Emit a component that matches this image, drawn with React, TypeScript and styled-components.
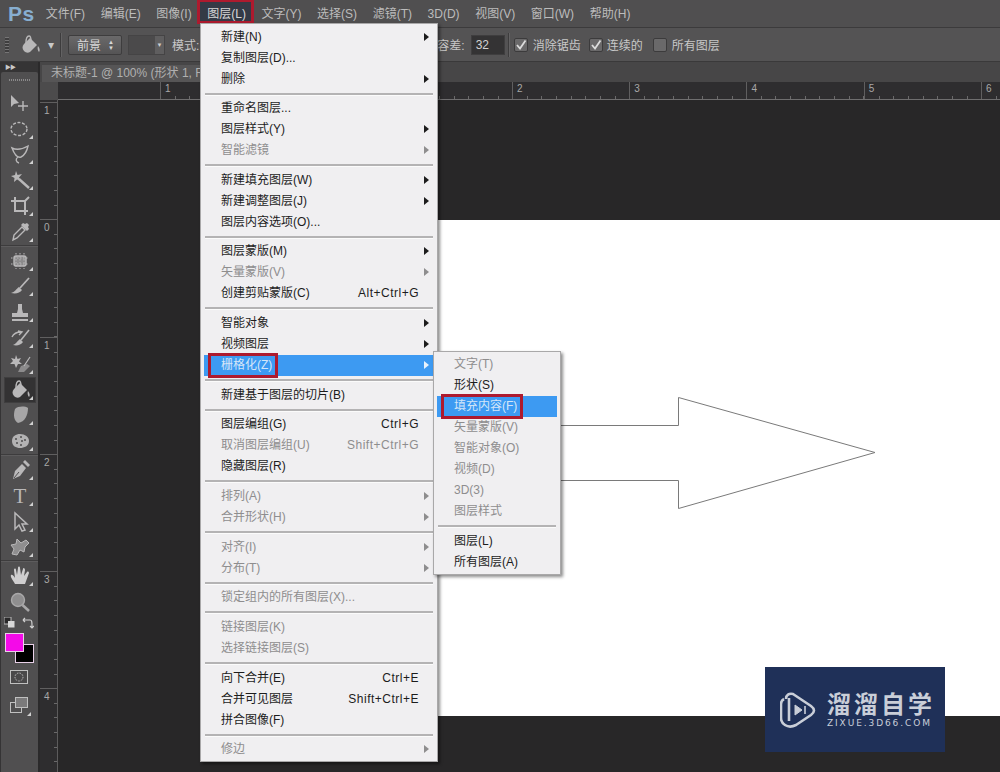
import React from 'react';
import styled, { createGlobalStyle } from 'styled-components';

const FONT = `"Liberation Sans", "Noto Sans CJK SC", sans-serif`;
const ICON = '#b9b8b9';

const colors = {
  bar: '#504f50',
  options: '#545354',
  tabRow: '#474647',
  ruler: '#2e2d2f',
  doc: '#282728',
  menu: '#f0eff1',
  highlight: '#3d9af2',
  red: '#ad1a2e',
};

const GlobalStyle = createGlobalStyle`
  html, body {
    margin: 0;
    padding: 0;
    background: ${colors.doc};
  }
  * {
    box-sizing: border-box;
  }
`;

const Styled = {
  Page: styled.div`
    position: relative;
    display: flex;
    flex-direction: column;
    width: 1000px;
    height: 772px;
    overflow: hidden;
    background: ${colors.doc};
    font-family: ${FONT};
    font-size: 12px;
  `,
  MenuBar: styled.div`
    display: flex;
    align-items: center;
    flex: none;
    height: 28px;
    padding-left: 8px;
    background: ${colors.bar};
    border-bottom: 1px solid #3c3b3c;
  `,
  Logo: styled.span`
    width: 30px;
    font-size: 21px;
    font-weight: 700;
    letter-spacing: 0.5px;
    color: #87aed0;
  `,
  BarItem: styled.span<{ $active?: boolean }>`
    position: relative;
    padding: 0 7.8px;
    line-height: 28px;
    white-space: nowrap;
    color: ${(p) => (p.$active ? '#d6d6d6' : '#bcbcbc')};
    ${(p) =>
      p.$active &&
      `
      &::before {
        content: '';
        position: absolute;
        inset: 0 0 4px -2px;
        background: #343a46;
        border: 3px solid ${colors.red};
        border-top-width: 2px;
        z-index: 0;
      }
    `}
  `,
  BarLabel: styled.span`
    position: relative;
  `,
  OptionsBar: styled.div`
    display: flex;
    align-items: center;
    flex: none;
    height: 34px;
    padding-left: 5px;
    background: ${colors.options};
    border-bottom: 1px solid #3a393a;
    color: #c8c8c8;
  `,
  Grip: styled.span`
    width: 4px;
    height: 16px;
    background: repeating-linear-gradient(#767576 0 1px, #3f3e3f 1px 3px);
  `,
  OptionIcon: styled.span<{ $ml: number }>`
    display: flex;
    margin-left: ${(p) => p.$ml}px;
  `,
  OptionDivider: styled.span<{ $ml: number }>`
    width: 1px;
    height: 24px;
    margin-left: ${(p) => p.$ml}px;
    background: #3d3c3d;
    box-shadow: 1px 0 0 #636263;
  `,
  Select: styled.span`
    display: flex;
    align-items: center;
    justify-content: space-between;
    width: 54px;
    height: 20px;
    margin-left: 7px;
    padding: 0 7px 0 8px;
    background: linear-gradient(#6a696a, #555455);
    border: 1px solid #3e3d3e;
    border-radius: 2px;
    color: #d8d8d8;
  `,
  SelectArrows: styled.span`
    font-size: 6px;
    line-height: 6px;
    color: #d8d8d8;
    text-align: center;
  `,
  Pattern: styled.span`
    display: flex;
    justify-content: flex-end;
    width: 37px;
    height: 20px;
    margin-left: 6px;
    background: #4b4a4b;
    border: 1px solid #454445;
  `,
  PatternCaret: styled.span`
    width: 9px;
    background: #5f5e5f;
    color: #cfcfcf;
    font-size: 6px;
    line-height: 18px;
    text-align: center;
  `,
  OptionText: styled.span<{ $ml: number }>`
    margin-left: ${(p) => p.$ml}px;
    white-space: nowrap;
  `,
  NumberBox: styled.span`
    width: 34px;
    height: 20px;
    margin-left: 6px;
    padding-left: 4px;
    background: #343334;
    border: 1px solid #3f3e3f;
    font-size: 12px;
    line-height: 18px;
    color: #d2d2d2;
  `,
  Check: styled.span<{ $ml: number }>`
    display: flex;
    align-items: center;
    justify-content: center;
    width: 14px;
    height: 14px;
    margin-left: ${(p) => p.$ml}px;
    background: #6a696a;
    border: 1px solid #3c3b3c;
    border-radius: 2px;
  `,
  Workspace: styled.div`
    display: flex;
    flex: 1;
    min-height: 0;
  `,
  ToolColumn: styled.div`
    flex: none;
    width: 40px;
    background: #353435;
    border-right: 2px solid #2b2a2b;
  `,
  Collapse: styled.div`
    height: 10px;
    padding-left: 5px;
    font-size: 6px;
    line-height: 10px;
    letter-spacing: -1px;
    color: #c8c8c8;
  `,
  Tools: styled.div`
    height: 700px;
    margin-left: 1px;
    background: #504f50;
    border-radius: 2px 2px 0 0;
  `,
  ToolGrip: styled.div`
    height: 18px;
    padding: 7px 8px 0;
    &::before {
      content: '';
      display: block;
      height: 2px;
      background: repeating-linear-gradient(90deg, #8a898a 0 1px, #504f50 1px 2px);
    }
  `,
  ToolSep: styled.div`
    height: 3px;
    border-top: 1px solid #3d3c3d;
    box-shadow: inset 0 1px 0 #5d5c5d;
  `,
  ToolButton: styled.div<{ $selected?: boolean; $corner?: boolean }>`
    position: relative;
    display: flex;
    align-items: center;
    justify-content: center;
    height: 25.8px;
    margin: 0 2px 0 3px;
    background: ${(p) => (p.$selected ? '#333233' : 'transparent')};
    box-shadow: ${(p) => (p.$selected ? 'inset 0 0 0 1px #3f3e3f' : 'none')};
    ${(p) =>
      p.$corner &&
      `
      &::after {
        content: '';
        position: absolute;
        right: 3px;
        bottom: 3px;
        border-left: 4px solid transparent;
        border-bottom: 4px solid #d0d0d0;
      }
    `}
  `,
  ToolLetter: styled.span`
    font-family: "Liberation Serif", serif;
    font-size: 21px;
    line-height: 24px;
    color: ${ICON};
  `,
  ColorBlock: styled.div`
    position: relative;
    height: 49px;
  `,
  MiniIcon: styled.span<{ $x: number }>`
    position: absolute;
    left: ${(p) => p.$x}px;
    top: 2px;
    display: flex;
  `,
  Swatch: styled.span<{ $x: number; $y: number; $fill: string }>`
    position: absolute;
    left: ${(p) => p.$x}px;
    top: ${(p) => p.$y}px;
    width: 19px;
    height: 19px;
    background: ${(p) => p.$fill};
    border: 1px solid #e8d0e8;
  `,
  FlatTool: styled.div<{ $height: number; $corner?: boolean }>`
    position: relative;
    display: flex;
    align-items: center;
    justify-content: center;
    height: ${(p) => p.$height}px;
    margin-right: 2px;
    ${(p) =>
      p.$corner &&
      `
      &::after {
        content: '';
        position: absolute;
        right: 5px;
        bottom: 4px;
        border-left: 4px solid transparent;
        border-bottom: 4px solid #d0d0d0;
      }
    `}
  `,
  DocColumn: styled.div`
    display: flex;
    flex-direction: column;
    flex: 1;
    min-width: 0;
  `,
  TabRow: styled.div`
    flex: none;
    height: 20px;
    background: ${colors.tabRow};
  `,
  Tab: styled.div`
    width: 170px;
    height: 17px;
    margin: 3px 0 0 2px;
    padding-left: 9px;
    background: #565556;
    line-height: 17px;
    white-space: nowrap;
    color: #b0b0b0;
  `,
  RulerRow: styled.div`
    display: flex;
    flex: none;
    height: 18px;
  `,
  Corner: styled.div`
    flex: none;
    width: 18px;
    background: #4c4b4c;
  `,
  HRuler: styled.div`
    display: flex;
    flex: 1;
    padding-left: 102px;
    overflow: hidden;
    background: ${colors.ruler};
    border-bottom: 1px solid #6f6e6f;
  `,
  HSegment: styled.div`
    flex: none;
    width: 117.3px;
    padding: 1px 0 0 4px;
    font-size: 10px;
    line-height: 12px;
    color: #a8a8a8;
    border-left: 1px solid #605f60;
    background:
      repeating-linear-gradient(90deg, transparent 0 13.66px, #6a696a 13.66px 14.66px) 0 100% / 100% 3px no-repeat;
  `,
  DocBody: styled.div`
    display: flex;
    flex: 1;
    min-height: 0;
  `,
  VRuler: styled.div`
    flex: none;
    width: 18px;
    padding-top: 2px;
    overflow: hidden;
    background: ${colors.ruler};
    border-right: 1px solid #5c5b5c;
  `,
  VSegment: styled.div`
    height: 117.3px;
    padding: 2px 0 0 4px;
    font-size: 10px;
    line-height: 12px;
    color: #a8a8a8;
    border-top: 1px solid #605f60;
    background:
      repeating-linear-gradient(transparent 0 13.66px, #6a696a 13.66px 14.66px) 100% 0 / 3px 100% no-repeat;
  `,
  Stage: styled.div`
    flex: 1;
    padding: 120px 0 0 219px;
    overflow: hidden;
    background: ${colors.doc};
  `,
  Canvas: styled.div`
    width: 723px;
    height: 496px;
    background: #ffffff;
  `,
  ArrowShape: styled.svg`
    display: block;
  `,
  Menu: styled.div<{ $x: number; $y: number; $w: number }>`
    position: absolute;
    left: ${(p) => p.$x}px;
    top: ${(p) => p.$y}px;
    width: ${(p) => p.$w}px;
    padding: 2.5px 3px 1px;
    background: ${colors.menu};
    border: 1px solid #a9a8a9;
    box-shadow: 2px 2px 3px rgba(0, 0, 0, 0.45);
  `,
  Row: styled.div<{ $active?: boolean; $disabled?: boolean }>`
    position: relative;
    display: flex;
    justify-content: space-between;
    height: 21px;
    padding: 0 15px 0 17px;
    line-height: 21px;
    white-space: nowrap;
    background: ${(p) => (p.$active ? colors.highlight : 'transparent')};
    color: ${(p) => (p.$active ? '#d4e6f8' : p.$disabled ? '#8e8d8e' : '#1c1c1c')};
  `,
  RowLabel: styled.span<{ $marked?: boolean }>`
    position: relative;
    ${(p) =>
      p.$marked &&
      `
      &::after {
        content: '';
        position: absolute;
        inset: -2px -6px -2px -13px;
        border: 3px solid ${colors.red};
      }
    `}
  `,
  Shortcut: styled.span`
    letter-spacing: 0.5px;
  `,
  Caret: styled.span<{ $light?: boolean; $disabled?: boolean }>`
    position: absolute;
    right: 5px;
    top: 6px;
    border-top: 4.5px solid transparent;
    border-bottom: 4.5px solid transparent;
    border-left: 5px solid
      ${(p) => (p.$light ? '#e8f2fc' : p.$disabled ? '#8e8d8e' : '#1c1c1c')};
  `,
  Separator: styled.div`
    height: 8.67px;
    padding-top: 3px;
    margin: 0 1px;
    &::before {
      content: '';
      display: block;
      height: 2px;
      background: #b4b3b4;
      border-bottom: 1px solid #fbfbfb;
    }
  `,
  Watermark: styled.div`
    position: absolute;
    left: 765px;
    top: 667px;
    display: flex;
    align-items: center;
    gap: 11px;
    width: 180px;
    height: 85px;
    padding: 0 0 0 15px;
    background: #1f3058;
    color: #c9ced8;
  `,
  WatermarkText: styled.div`
    display: flex;
    flex-direction: column;
  `,
  WatermarkTitle: styled.span`
    font-family: "Noto Sans CJK SC", sans-serif;
    font-size: 24px;
    font-weight: 700;
    line-height: 28px;
    letter-spacing: 3px;
    white-space: nowrap;
  `,
  WatermarkSub: styled.span`
    font-family: "DejaVu Sans", sans-serif;
    font-size: 9px;
    line-height: 13px;
    letter-spacing: 1.9px;
    white-space: nowrap;
  `,
};

type MenuEntry =
  | 'sep'
  | {
      label: string;
      shortcut?: string;
      arrow?: boolean;
      disabled?: boolean;
      active?: boolean;
      marked?: boolean;
    };

const layerMenu: MenuEntry[] = [
  { label: '新建(N)', arrow: true },
  { label: '复制图层(D)...' },
  { label: '删除', arrow: true },
  'sep',
  { label: '重命名图层...' },
  { label: '图层样式(Y)', arrow: true },
  { label: '智能滤镜', arrow: true, disabled: true },
  'sep',
  { label: '新建填充图层(W)', arrow: true },
  { label: '新建调整图层(J)', arrow: true },
  { label: '图层内容选项(O)...' },
  'sep',
  { label: '图层蒙版(M)', arrow: true },
  { label: '矢量蒙版(V)', arrow: true, disabled: true },
  { label: '创建剪贴蒙版(C)', shortcut: 'Alt+Ctrl+G' },
  'sep',
  { label: '智能对象', arrow: true },
  { label: '视频图层', arrow: true },
  { label: '栅格化(Z)', arrow: true, active: true, marked: true },
  'sep',
  { label: '新建基于图层的切片(B)' },
  'sep',
  { label: '图层编组(G)', shortcut: 'Ctrl+G' },
  { label: '取消图层编组(U)', shortcut: 'Shift+Ctrl+G', disabled: true },
  { label: '隐藏图层(R)' },
  'sep',
  { label: '排列(A)', arrow: true, disabled: true },
  { label: '合并形状(H)', arrow: true, disabled: true },
  'sep',
  { label: '对齐(I)', arrow: true, disabled: true },
  { label: '分布(T)', arrow: true, disabled: true },
  'sep',
  { label: '锁定组内的所有图层(X)...', disabled: true },
  'sep',
  { label: '链接图层(K)', disabled: true },
  { label: '选择链接图层(S)', disabled: true },
  'sep',
  { label: '向下合并(E)', shortcut: 'Ctrl+E' },
  { label: '合并可见图层', shortcut: 'Shift+Ctrl+E' },
  { label: '拼合图像(F)' },
  'sep',
  { label: '修边', arrow: true, disabled: true },
];

const rasterizeMenu: MenuEntry[] = [
  { label: '文字(T)', disabled: true },
  { label: '形状(S)' },
  { label: '填充内容(F)', active: true, marked: true },
  { label: '矢量蒙版(V)', disabled: true },
  { label: '智能对象(O)', disabled: true },
  { label: '视频(D)', disabled: true },
  { label: '3D(3)', disabled: true },
  { label: '图层样式', disabled: true },
  'sep',
  { label: '图层(L)' },
  { label: '所有图层(A)' },
];

const barItems = ['文件(F)', '编辑(E)', '图像(I)', '图层(L)', '文字(Y)', '选择(S)', '滤镜(T)', '3D(D)', '视图(V)', '窗口(W)', '帮助(H)'];

const Icon = ({ children, size = 24 }: { children: React.ReactNode; size?: number }) => (
  <svg width={size} height={size} viewBox={`0 0 ${size} ${size}`} fill="none" stroke={ICON} strokeWidth="1.4">
    {children}
  </svg>
);

const BucketIcon = () => (
  <>
    <path d="M6 11 L12 5 L19 12 L12 19 C10 20 8 20 6 18 C4 16 4 13 6 11 Z" fill={ICON} stroke="none" />
    <path d="M8 10 C8 6 9 3 11 3 C13 3 13 6 13 8" />
    <path d="M20 13 C22 15 22 18 21 19 C20 18 19 15 20 13 Z" fill={ICON} stroke="none" />
  </>
);

const toolGroups: { key: string; icon: React.ReactNode; corner?: boolean; selected?: boolean }[][] = [
  [
    {
      key: 'move',
      icon: (
        <>
          <path d="M3 4 L3 16 L6 13 L11 12 Z" fill={ICON} stroke="none" />
          <path d="M15 10 V20 M10 15 H20" />
        </>
      ),
    },
    { key: 'marquee', corner: true, icon: <ellipse cx="11" cy="12" rx="8" ry="6.5" strokeDasharray="3 1.6" /> },
    {
      key: 'lasso',
      corner: true,
      icon: <path d="M4 6 C8 8 13 8 20 4 C19 9 17 13 13 15 C10 16 7 14 4 6 Z M10 15 C7 17 8 20 11 21" />,
    },
    {
      key: 'wand',
      corner: true,
      icon: (
        <>
          <path d="M11 11 L21 20" strokeWidth="2.4" />
          <path d="M8 3 L9.5 7 L14 6 L11 9.5 L13 13 L9 11.5 L6 14 L6.5 10 L3 8 L7 7 Z" fill={ICON} stroke="none" />
        </>
      ),
    },
    {
      key: 'crop',
      corner: true,
      icon: <path d="M7 3 V17 H20 M3 7 H17 V21 M17 7 L21 3" strokeWidth="2" />,
    },
    {
      key: 'eyedropper',
      corner: true,
      icon: (
        <>
          <path d="M14 7 L17 10 L9 18 L5 20 L6 15 Z" />
          <path d="M13 5 L19 11 L21 9 L20 7 L21 5 L19 3 L17 4 L15 3 Z" fill={ICON} stroke="none" />
        </>
      ),
    },
  ],
  [
    {
      key: 'heal',
      corner: true,
      icon: (
        <>
          <rect x="6" y="7" width="12" height="10" rx="2" fill="#8c8b8c" stroke={ICON} />
          <path d="M8 4 V20 M12 4 V20 M16 4 V20 M3 9 H21 M3 15 H21" strokeDasharray="1.5 1.5" strokeWidth="1" />
        </>
      ),
    },
    {
      key: 'brush',
      corner: true,
      icon: (
        <>
          <path d="M21 4 L12 14" strokeWidth="1.8" />
          <path d="M11 13 L14 16 C12 19 8 20 3 19 C7 18 8 15 11 13 Z" fill={ICON} stroke="none" />
        </>
      ),
    },
    {
      key: 'stamp',
      corner: true,
      icon: (
        <path
          d="M10 4 H14 V9 L15 13 H20 V17 H4 V13 H9 L10 9 Z M4 19 H20 V21 H4 Z"
          fill={ICON}
          stroke="none"
        />
      ),
    },
    {
      key: 'history',
      corner: true,
      icon: (
        <>
          <path d="M21 4 L13 14" strokeWidth="1.6" />
          <path d="M12 13 L15 16 C13 19 9 20 5 19 C8 18 9 15 12 13 Z" fill={ICON} stroke="none" />
          <path d="M4 11 C6 7 9 6 13 6 M10 5 L14 6 L11 9" />
        </>
      ),
    },
    {
      key: 'eraser',
      corner: true,
      icon: (
        <>
          <path d="M8 3 L9.5 7 L13 6 L11 9.5 L14 12 L10 12 L8 16 L6.5 12 L2 12 L5 9 L3 6 L7 7 Z" fill={ICON} stroke="none" />
          <path d="M13 14 L19 12 L22 14 L16 20 L10 20 Z" fill="#8c8b8c" stroke="none" />
          <path d="M16 14 L22 5" strokeWidth="1.2" />
        </>
      ),
    },
    { key: 'bucket', corner: true, selected: true, icon: <BucketIcon /> },
    {
      key: 'smudge',
      corner: true,
      icon: <path d="M7 6 C10 3 17 3 20 5 C20 12 17 19 10 20 C6 18 5 12 7 6 Z" fill="#a7a6a7" stroke="none" />,
    },
    {
      key: 'sponge',
      corner: true,
      icon: (
        <>
          <path d="M4 12 C4 7 8 5 12 5 C17 5 21 8 21 12 C21 17 16 19 12 19 C8 19 4 17 4 12 Z" fill="#b3b2b3" stroke="none" />
          <path d="M7 10 H9 M12 8 H14 M16 11 H18 M8 14 H10 M13 12 H15 M12 16 H14" stroke="#504f50" />
        </>
      ),
    },
  ],
  [
    {
      key: 'pen',
      corner: true,
      icon: (
        <>
          <path d="M14 6 L18 10 L12 18 L5 21 L7 13 Z" fill={ICON} stroke="none" />
          <path d="M15 4 L17 2 L22 7 L20 9 Z" fill={ICON} stroke="none" />
          <path d="M6 20 L11 14" stroke="#504f50" strokeWidth="1" />
        </>
      ),
    },
    { key: 'type', corner: true, icon: null },
    {
      key: 'path',
      corner: true,
      icon: <path d="M7 3 V19 L11 15 L14 21 L17 20 L14 14 L19 14 Z" fill="#504f50" strokeWidth="1.5" />,
    },
    {
      key: 'shape',
      corner: true,
      icon: (
        <path
          d="M9 4 L13 8 L18 5 L21 8 L17 12 L16 17 L12 15 L9 20 L4 19 L6 14 L3 10 L8 9 Z"
          fill="#8f8e8f"
          stroke={ICON}
          strokeWidth="1"
        />
      ),
    },
  ],
  [
    {
      key: 'hand',
      corner: true,
      icon: (
        <path
          d="M7 20 C5 16 2 13 3 11 C4 10 6 12 7 14 L6 6 C6 4 8 4 8 6 L9 11 L10 4 C10 2 12 2 12 4 L13 11 L15 5 C15 3 17 4 17 6 L16 12 L19 8 C20 7 21 8 21 9 L17 20 Z"
          fill="#cfcecf"
          stroke="none"
        />
      ),
    },
    {
      key: 'zoom',
      icon: (
        <>
          <circle cx="10" cy="10" r="6.5" fill="#8f8e8f" stroke="#a9a8a9" />
          <path d="M14.5 15 L21 21" strokeWidth="2.6" stroke="#a9a8a9" />
        </>
      ),
    },
  ],
];

const MenuList = ({ items }: { items: MenuEntry[] }) => (
  <>
    {items.map((item, index) =>
      item === 'sep' ? (
        <Styled.Separator key={index} />
      ) : (
        <Styled.Row key={item.label} $active={item.active} $disabled={item.disabled}>
          <Styled.RowLabel $marked={item.marked}>{item.label}</Styled.RowLabel>
          {item.shortcut && <Styled.Shortcut>{item.shortcut}</Styled.Shortcut>}
          {item.arrow && <Styled.Caret $light={item.active} $disabled={item.disabled} />}
        </Styled.Row>
      ),
    )}
  </>
);

const CheckMark = () => (
  <svg width="12" height="12" viewBox="0 0 12 12" fill="none" stroke="#dcdcdc" strokeWidth="1.8">
    <path d="M2 6 L5 9.5 L10.5 1.5" />
  </svg>
);

export const App = () => (
  <Styled.Page>
    <GlobalStyle />
    <Styled.MenuBar>
      <Styled.Logo>Ps</Styled.Logo>
      {barItems.map((item) => (
        <Styled.BarItem key={item} $active={item === '图层(L)'}>
          <Styled.BarLabel>{item}</Styled.BarLabel>
        </Styled.BarItem>
      ))}
    </Styled.MenuBar>

    <Styled.OptionsBar>
      <Styled.Grip />
      <Styled.OptionIcon $ml={9}>
        <Icon>
          <BucketIcon />
        </Icon>
      </Styled.OptionIcon>
      <Styled.OptionText $ml={6}>▾</Styled.OptionText>
      <Styled.OptionDivider $ml={6} />
      <Styled.Select>
        前景
        <Styled.SelectArrows>
          ▲
          <br />▼
        </Styled.SelectArrows>
      </Styled.Select>
      <Styled.Pattern>
        <Styled.PatternCaret>▼</Styled.PatternCaret>
      </Styled.Pattern>
      <Styled.OptionText $ml={7}>模式:</Styled.OptionText>
      <Styled.OptionText $ml={238}>容差:</Styled.OptionText>
      <Styled.NumberBox>32</Styled.NumberBox>
      <Styled.OptionDivider $ml={3} />
      <Styled.Check $ml={5}>
        <CheckMark />
      </Styled.Check>
      <Styled.OptionText $ml={5}>消除锯齿</Styled.OptionText>
      <Styled.Check $ml={8}>
        <CheckMark />
      </Styled.Check>
      <Styled.OptionText $ml={4}>连续的</Styled.OptionText>
      <Styled.Check $ml={10} />
      <Styled.OptionText $ml={5}>所有图层</Styled.OptionText>
    </Styled.OptionsBar>

    <Styled.Workspace>
      <Styled.ToolColumn>
        <Styled.Collapse>▶▶</Styled.Collapse>
        <Styled.Tools>
          <Styled.ToolGrip />
          {toolGroups.map((group, groupIndex) => (
            <div key={group[0].key}>
              {groupIndex > 0 && <Styled.ToolSep />}
              {group.map((tool) => (
                <Styled.ToolButton key={tool.key} $corner={tool.corner} $selected={tool.selected}>
                  {tool.key === 'type' ? <Styled.ToolLetter>T</Styled.ToolLetter> : <Icon>{tool.icon}</Icon>}
                </Styled.ToolButton>
              ))}
            </div>
          ))}
          <Styled.ColorBlock>
            <Styled.MiniIcon $x={3}>
              <svg width="11" height="11" viewBox="0 0 11 11">
                <rect x="0" y="0" width="7" height="7" fill="#2a292a" stroke="#bbb" />
                <rect x="4" y="4" width="6.5" height="6.5" fill="#d8d8d8" />
              </svg>
            </Styled.MiniIcon>
            <Styled.MiniIcon $x={21}>
              <svg width="12" height="12" viewBox="0 0 12 12" fill="none" stroke="#d0d0d0" strokeWidth="1.2">
                <path d="M1 3 H8 C10 3 10 5 10 10 M1 3 L3 1 M1 3 L3 5 M8 9 L10 11 L12 9" />
              </svg>
            </Styled.MiniIcon>
            <Styled.Swatch $x={14} $y={29} $fill="#000000" />
            <Styled.Swatch $x={4} $y={18} $fill="#f40ae8" />
          </Styled.ColorBlock>
          <Styled.FlatTool $height={27}>
            <svg width="18" height="14" viewBox="0 0 18 14" fill="none" stroke="#c0c0c0">
              <rect x="0.5" y="0.5" width="17" height="13" fill="#4a494a" />
              <circle cx="9" cy="7" r="4" strokeDasharray="1.5 1.2" />
            </svg>
          </Styled.FlatTool>
          <Styled.FlatTool $height={29} $corner>
            <svg width="18" height="16" viewBox="0 0 18 16" stroke="#c0c0c0">
              <rect x="0.5" y="5.5" width="11" height="10" fill="#504f50" />
              <rect x="5.5" y="0.5" width="12" height="10" fill="#7b7a7b" />
            </svg>
          </Styled.FlatTool>
        </Styled.Tools>
      </Styled.ToolColumn>

      <Styled.DocColumn>
        <Styled.TabRow>
          <Styled.Tab>未标题-1 @ 100% (形状 1, R</Styled.Tab>
        </Styled.TabRow>
        <Styled.RulerRow>
          <Styled.Corner />
          <Styled.HRuler>
            {['1', '0', '1', '2', '3', '4', '5', '6'].map((mark, index) => (
              <Styled.HSegment key={index}>{mark}</Styled.HSegment>
            ))}
          </Styled.HRuler>
        </Styled.RulerRow>
        <Styled.DocBody>
          <Styled.VRuler>
            {['1', '0', '1', '2', '3', '4'].map((mark, index) => (
              <Styled.VSegment key={index}>{mark}</Styled.VSegment>
            ))}
          </Styled.VRuler>
          <Styled.Stage>
            <Styled.Canvas>
              <Styled.ArrowShape width="723" height="496" viewBox="0 0 723 496" fill="none" stroke="#7a7a7a">
                <path d="M120 205.5 H401.5 V177.5 L598 232.5 L401.5 288.5 V260.5 H120" />
              </Styled.ArrowShape>
            </Styled.Canvas>
          </Styled.Stage>
        </Styled.DocBody>
      </Styled.DocColumn>
    </Styled.Workspace>

    <Styled.Menu $x={200} $y={23} $w={238}>
      <MenuList items={layerMenu} />
    </Styled.Menu>
    <Styled.Menu $x={433} $y={350.5} $w={128}>
      <MenuList items={rasterizeMenu} />
    </Styled.Menu>

    <Styled.Watermark>
      <svg width="36" height="38" viewBox="0 0 36 38" fill="none" stroke="#c9ced8" strokeWidth="2.6" strokeLinejoin="round">
        <path d="M6 8 C6 4 9 2 13 3 L31 15 C35 18 35 21 31 24 L16 34 C12 36 8 36 5 34 C2 32 1 30 1 27 V13 C1 10 2 9 4 8" />
        <path d="M9 7 V30" />
        <path d="M15 14 L22 19 L15 24 Z" fill="#c9ced8" strokeWidth="1" />
        <path d="M25 15 V23" strokeWidth="1.6" />
      </svg>
      <Styled.WatermarkText>
        <Styled.WatermarkTitle>溜溜自学</Styled.WatermarkTitle>
        <Styled.WatermarkSub>ZIXUE.3D66.COM</Styled.WatermarkSub>
      </Styled.WatermarkText>
    </Styled.Watermark>
  </Styled.Page>
);

export default App;
